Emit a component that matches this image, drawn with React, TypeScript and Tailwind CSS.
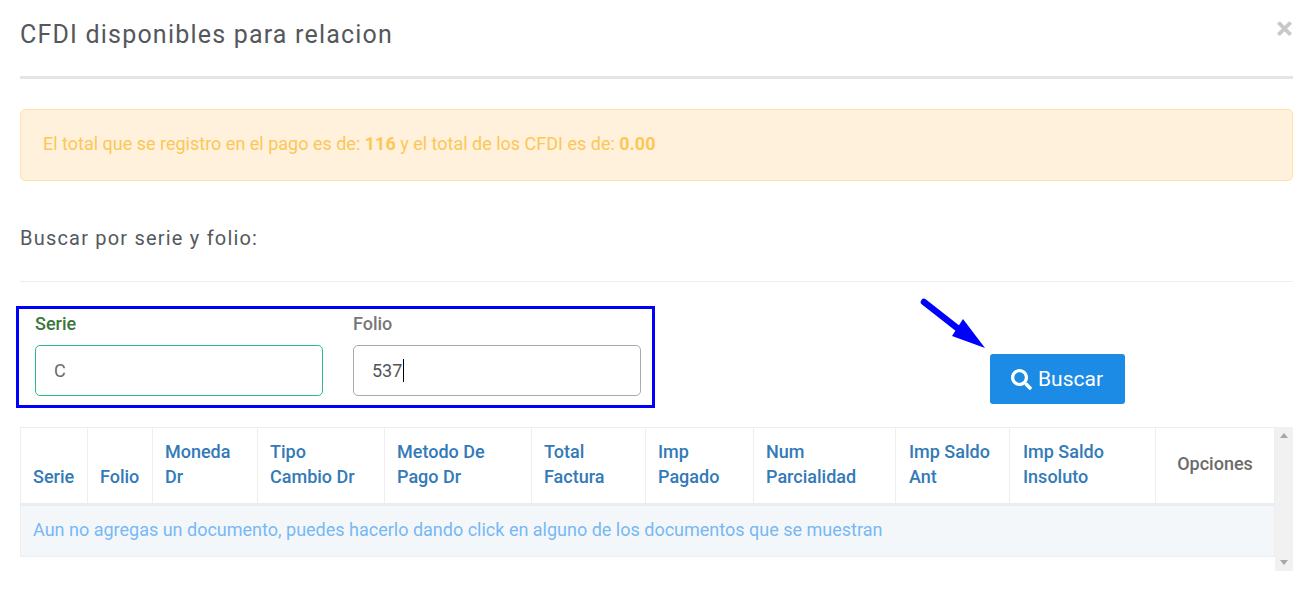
import { FaSearch } from 'react-icons/fa'

const font = { fontFamily: 'Roboto, "Liberation Sans", sans-serif' }

const columns = [
  { lines: ['Serie'], width: 'w-[67px] pl-[12px]' },
  { lines: ['Folio'], width: 'w-[65px] pl-[12px]' },
  { lines: ['Moneda', 'Dr'], width: 'w-[105px] pl-[12px]' },
  { lines: ['Tipo', 'Cambio Dr'], width: 'w-[127px] pl-[12px]' },
  { lines: ['Metodo De', 'Pago Dr'], width: 'w-[147px] pl-[12px]' },
  { lines: ['Total', 'Factura'], width: 'w-[114px] pl-[12px]' },
  { lines: ['Imp', 'Pagado'], width: 'w-[108px] pl-[12px]' },
  { lines: ['Num', 'Parcialidad'], width: 'w-[142px] pl-[12px]' },
  { lines: ['Imp Saldo', 'Ant'], width: 'w-[114px] pl-[13px]' },
  { lines: ['Imp Saldo', 'Insoluto'], width: 'w-[146px] pl-[13px]' },
]

export default function App() {
  return (
    <div className="relative h-[600px] w-[1314px] overflow-hidden bg-white pl-[20px] pr-[21px]" style={font}>
      {/* Header */}
      <div className="flex h-[79px] items-start justify-between border-b-[3px] border-[#e5e5e5] pt-[20px]">
        <h4 className="text-[25px] leading-[30px] tracking-[1.2px] text-[#54585d]">CFDI disponibles para relacion</h4>
        <span className="-mt-[7px] text-[32px] font-bold leading-[30px] text-[#c8c8c8]">×</span>
      </div>

      {/* Alert */}
      <div className="mt-[30px] flex h-[72px] items-center rounded-[5px] border border-[#ffe3ab] bg-[#fff1db] px-[22px] pb-[4px] text-[18px] text-[#fcc757]">
        <span>
          El total que se registro en el pago es de: <b>116</b> y el total de los CFDI es de: <b>0.00</b>
        </span>
      </div>

      <h5 className="mt-[45px] text-[20px] leading-[24px] tracking-[1.2px] text-[#54585d]">Buscar por serie y folio:</h5>
      <hr className="mt-[31px] border-[#eeeeee]" />

      {/* Search form */}
      <div className="mt-[24px] flex items-start">
        <div className="-ml-[4px] flex h-[102px] w-[639px] gap-[30px] border-[3px] border-[#0000ff] pl-[16px] pt-[4px]">
          <div className="w-[288px]">
            <label className="block text-[18px] font-medium leading-[22px] text-[#3c763d]">Serie</label>
            <div className="mt-[10px] flex h-[51px] items-center rounded-[5px] border border-[#2bbd7e] px-[18px] text-[18px] text-[#6b6b6b]">C</div>
          </div>
          <div className="w-[288px]">
            <label className="block text-[18px] font-medium leading-[22px] text-[#777777]">Folio</label>
            <div className="mt-[10px] flex h-[51px] items-center rounded-[5px] border border-[#aaaaaa] px-[18px] text-[18px] text-[#555555]">
              537<span className="ml-px h-[23px] w-px bg-black" />
            </div>
          </div>
        </div>
        <button className="ml-[335px] mt-[48px] flex h-[50px] w-[135px] items-center justify-center gap-[6px] rounded-[3px] bg-[#1b8be5] pr-[1px] pt-[1px] text-[21px] text-white">
          <FaSearch size={21} />
          Buscar
        </button>
      </div>

      {/* Table */}
      <div className="mt-[19px] flex h-[144px] items-start bg-white">
        <table className="w-[1255px] table-fixed border-collapse text-[18px]">
          <thead>
            <tr className="h-[77px] border-b-[3px] border-[#e9edf1]">
              {columns.map((col) => (
                <th key={col.lines.join('-')} className={`${col.width} border border-b-0 border-[#eeeeee] pb-[14px] text-left align-bottom text-[18px] font-medium leading-[25px] text-[#337ab7]`}>
                  {col.lines.map((line) => <div key={line}>{line}</div>)}
                </th>
              ))}
              <th className="border border-b-0 border-[#eeeeee] pb-[5px] text-center align-middle text-[18px] font-medium text-[#6b6b6b]">Opciones</th>
            </tr>
          </thead>
          <tbody>
            <tr className="h-[52px] border border-[#eeeeee] bg-[#f4f7fa]">
              <td colSpan={11} className="px-[12px] pb-[4px] text-[18px] text-[#77b8f5]">
                Aun no agregas un documento, puedes hacerlo dando click en alguno de los documentos que se muestran
              </td>
            </tr>
          </tbody>
        </table>
        <div className="flex h-full w-[18px] flex-col items-center justify-between bg-[#f1f1f1] py-[6px]">
          <div className="h-0 w-0 border-x-[4px] border-b-[5px] border-x-transparent border-b-[#a8a8a8]" />
          <div className="h-0 w-0 border-x-[4px] border-t-[5px] border-x-transparent border-t-[#a8a8a8]" />
        </div>
      </div>

      {/* Annotation arrow */}
      <svg className="absolute left-[915px] top-[292px]" width="80" height="64" viewBox="0 0 80 64">
        <path d="M9 10 L46 39" stroke="#0000ff" strokeWidth="6.5" strokeLinecap="round" />
        <path d="M37 44 L70 56 L48 27 Z" fill="#0000ff" />
      </svg>
    </div>
  )
}
